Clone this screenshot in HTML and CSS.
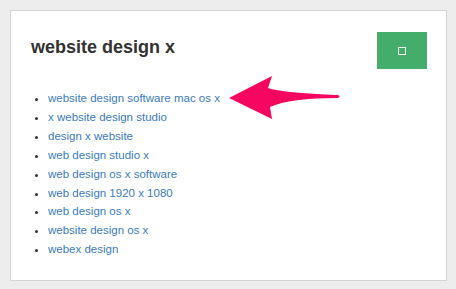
FILE: index.html
```html
<!DOCTYPE html>
<html lang="en">
<head>
    <meta charset="UTF-8">
    <meta name="viewport" content="width=device-width, initial-scale=1.0">
    <title>website design x</title>
    <link rel="stylesheet" href="styles.css">
</head>
<body>
    <div class="card">
        <div class="card-header">
            <h2>website design x</h2>
            <button class="btn-square" type="button" title="Toggle">
                <span class="square-icon"></span>
            </button>
        </div>

        <!-- Lista podobnych fraz -->
        <ul class="keywords">
            <li><a href="#">website design software mac os x</a></li>
            <li><a href="#">x website design studio</a></li>
            <li><a href="#">design x website</a></li>
            <li><a href="#">web design studio x</a></li>
            <li><a href="#">web design os x software</a></li>
            <li><a href="#">web design 1920 x 1080</a></li>
            <li><a href="#">web design os x</a></li>
            <li><a href="#">website design os x</a></li>
            <li><a href="#">webex design</a></li>
        </ul>

        <!-- Strzałka nad pierwszym wynikiem -->
        <svg class="arrow" width="130" height="55" viewBox="0 0 130 55">
            <path d="M9 28 L52 6 L48 18 Q62 23 118 25 Q121 26.5 118 28 Q70 28 50 37 L52 49 Z" fill="#f7065f"/>
        </svg>
    </div>
</body>
</html>
```

FILE: styles.css
```css
body {
    margin: 0;
    padding: 10px 9px 9px 10px;
    background-color: #ededed;
    font-family: "Liberation Sans", Arial, sans-serif;
    color: #333;
}

.card {
    position: relative;
    background-color: #fff;
    border: 1px solid #d4d4d4;
    padding: 21px 19px 20px 20px;
    height: 228px;
}

.card-header {
    display: flex;
    justify-content: space-between;
    align-items: flex-start;
}

.card-header h2 {
    margin: 0;
    padding-top: 5px;
    font-size: 18px;
    line-height: 20px;
    font-weight: bold;
    color: #333;
}

.btn-square {
    width: 50px;
    height: 37px;
    border: none;
    background-color: #45ad6b;
    display: flex;
    align-items: center;
    justify-content: center;
    padding: 0;
    cursor: pointer;
}

.square-icon {
    display: block;
    width: 6px;
    height: 6px;
    border: 1.5px solid rgba(255, 255, 255, 0.9);
}

.keywords {
    margin: 20px 0 0;
    padding-left: 17px;
    font-size: 11.5px;
    line-height: 18.9px;
}

.keywords a {
    color: #3a7cbf;
    text-decoration: none;
}

.keywords a:hover {
    text-decoration: underline;
}

.arrow {
    position: absolute;
    left: 209px;
    top: 59px;
}
```
